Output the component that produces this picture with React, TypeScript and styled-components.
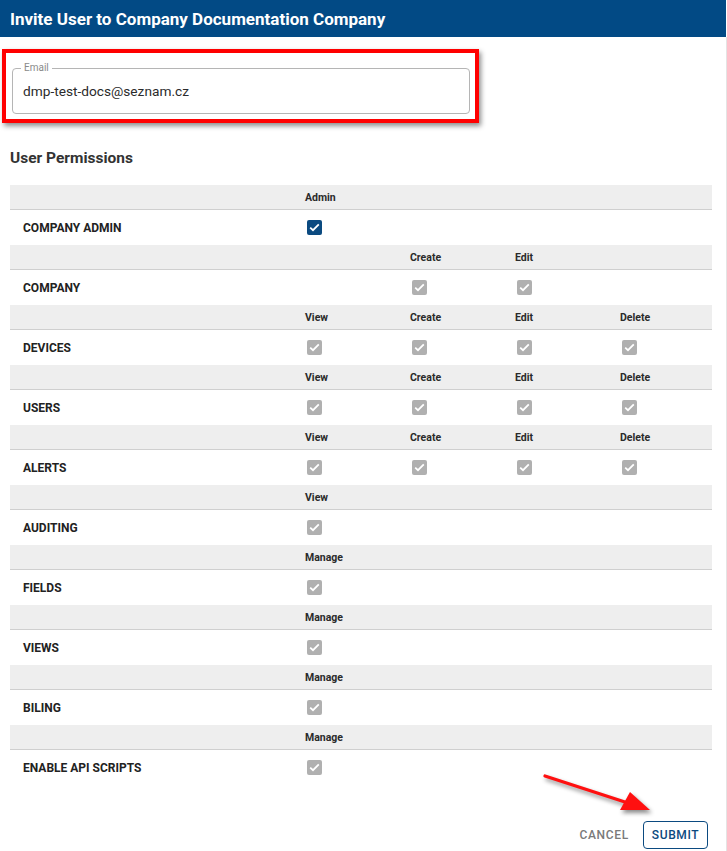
import React from "react";
import styled, { createGlobalStyle } from "styled-components";

const Global = createGlobalStyle`
  html, body { margin: 0; padding: 0; background: #fff; }
  body { font-family: Roboto, "Liberation Sans", Arial, sans-serif; }
  * { box-sizing: border-box; }
`;

const Dialog = styled.div`
  position: relative;
  width: 727px;
  min-height: 851px;
  background: #fff;
`;

const Header = styled.div`
  height: 37px;
  width: 726px;
  background: #024a85;
  display: flex;
  align-items: center;
  padding-left: 10px;
  color: #fff;
  font-size: 17px;
  font-weight: 700;
`;

const Body = styled.div`
  width: 727px;
  border-right: 1px solid #e4e4e4;
  min-height: 814px;
  padding-top: 12px;
  display: flex;
  flex-direction: column;
`;

const Highlight = styled.div`
  margin-left: 2px;
  width: 477px;
  border: 4px solid #ff0000;
  padding: 15px 5px 5px 6px;
  box-shadow: 2px 3px 5px rgba(0, 0, 0, 0.45);
`;

const Field = styled.fieldset`
  margin: 0;
  height: 46px;
  border: 1px solid #b5b5b5;
  border-radius: 4px;
  padding: 0 10px;
  position: relative;
  display: flex;
  align-items: center;
`;

const Legend = styled.legend`
  position: absolute;
  top: -7px;
  left: 8px;
  padding: 0 3px;
  background: #fff;
  font-size: 10px;
  color: #8a8a8a;
  line-height: 12px;
`;

const Value = styled.div`
  font-size: 13.7px;
  color: #2b2b2b;
`;

const SectionTitle = styled.div`
  margin: 27px 0 0 10px;
  font-size: 15.5px;
  font-weight: 700;
  color: #333;
  line-height: 16px;
`;

const Table = styled.div`
  margin: 19px 0 0 10px;
  width: 702px;
  display: grid;
  grid-template-columns: 280px repeat(4, 105px) minmax(0, 1fr);
`;

const HeadCell = styled.div`
  height: 25px;
  background: #eeeeee;
  border-bottom: 1px solid #cfcfcf;
  display: flex;
  align-items: center;
  padding-top: 1px;
`;

const HeadLabel = styled.span`
  margin-left: 15px;
  font-size: 10.5px;
  font-weight: 700;
  color: #2a2a2a;
`;

const LabelCell = styled.div`
  height: 35px;
  display: flex;
  align-items: center;
  padding-left: 13px;
  font-size: 12px;
  font-weight: 700;
  color: #222;
`;

const BoxCell = styled.div`
  height: 35px;
  display: flex;
  align-items: center;
`;

const Box = styled.span<{ $primary?: boolean }>`
  margin-left: 17px;
  width: 15px;
  height: 15px;
  border-radius: 2px;
  background: ${(p) => (p.$primary ? "#0b4a80" : "#b0b0b0")};
  display: flex;
  align-items: center;
  justify-content: center;
`;

const Footer = styled.div`
  display: flex;
  justify-content: flex-end;
  align-items: center;
  gap: 14px;
  margin-top: 36px;
  padding-right: 18px;
`;

const TextButton = styled.button`
  background: none;
  border: none;
  font-family: Roboto, "Liberation Sans", Arial, sans-serif;
  font-size: 12px;
  font-weight: 500;
  letter-spacing: 0.7px;
  color: #7a7a7a;
  padding: 0;
`;

const OutlineButton = styled.button`
  width: 65px;
  height: 28px;
  background: #fff;
  border: 1px solid #0b4a80;
  border-radius: 4px;
  font-family: Roboto, "Liberation Sans", Arial, sans-serif;
  font-size: 12px;
  font-weight: 500;
  letter-spacing: 0.6px;
  color: #0b4a80;
  padding: 0;
`;

const Arrow = styled.svg`
  position: absolute;
  left: 540px;
  top: 770px;
  overflow: visible;
  filter: drop-shadow(2px 3px 2px rgba(0, 0, 0, 0.45));
`;

const Check = ({ primary }: { primary?: boolean }) => (
  <Box $primary={primary}>
    <svg width="11" height="9" viewBox="0 0 11 9">
      <polyline points="1.2,4.6 4,7.2 9.8,1.4" fill="none" stroke="#fff" strokeWidth="1.8" />
    </svg>
  </Box>
);

type Section = { name: string; cols: (string | null)[]; primary?: boolean };

const sections: Section[] = [
  { name: "COMPANY ADMIN", cols: ["Admin", null, null, null], primary: true },
  { name: "COMPANY", cols: [null, "Create", "Edit", null] },
  { name: "DEVICES", cols: ["View", "Create", "Edit", "Delete"] },
  { name: "USERS", cols: ["View", "Create", "Edit", "Delete"] },
  { name: "ALERTS", cols: ["View", "Create", "Edit", "Delete"] },
  { name: "AUDITING", cols: ["View", null, null, null] },
  { name: "FIELDS", cols: ["Manage", null, null, null] },
  { name: "VIEWS", cols: ["Manage", null, null, null] },
  { name: "BILING", cols: ["Manage", null, null, null] },
  { name: "ENABLE API SCRIPTS", cols: ["Manage", null, null, null] },
];

export default function App() {
  return (
    <Dialog>
      <Global />
      <Header>Invite User to Company Documentation Company</Header>
      <Body>
        <Highlight>
          <Field>
            <Legend>Email</Legend>
            <Value>dmp-test-docs@seznam.cz</Value>
          </Field>
        </Highlight>
        <SectionTitle>User Permissions</SectionTitle>
        <Table>
          {sections.map((s) => (
            <React.Fragment key={s.name}>
              <HeadCell />
              {s.cols.map((c, i) => (
                <HeadCell key={"h" + i}>{c ? <HeadLabel>{c}</HeadLabel> : null}</HeadCell>
              ))}
              <HeadCell />
              <LabelCell>{s.name}</LabelCell>
              {s.cols.map((c, i) => (
                <BoxCell key={"b" + i}>{c ? <Check primary={s.primary} /> : null}</BoxCell>
              ))}
              <BoxCell />
            </React.Fragment>
          ))}
        </Table>
        <Footer>
          <TextButton>CANCEL</TextButton>
          <OutlineButton>SUBMIT</OutlineButton>
        </Footer>
      </Body>
      <Arrow width="115" height="45" viewBox="0 0 115 45">
        <line x1="5" y1="6" x2="88" y2="33" stroke="#ff1010" strokeWidth="3.2" strokeLinecap="round" />
        <polygon points="110,40 80,40 90,22" fill="#ff1010" />
      </Arrow>
    </Dialog>
  );
}
